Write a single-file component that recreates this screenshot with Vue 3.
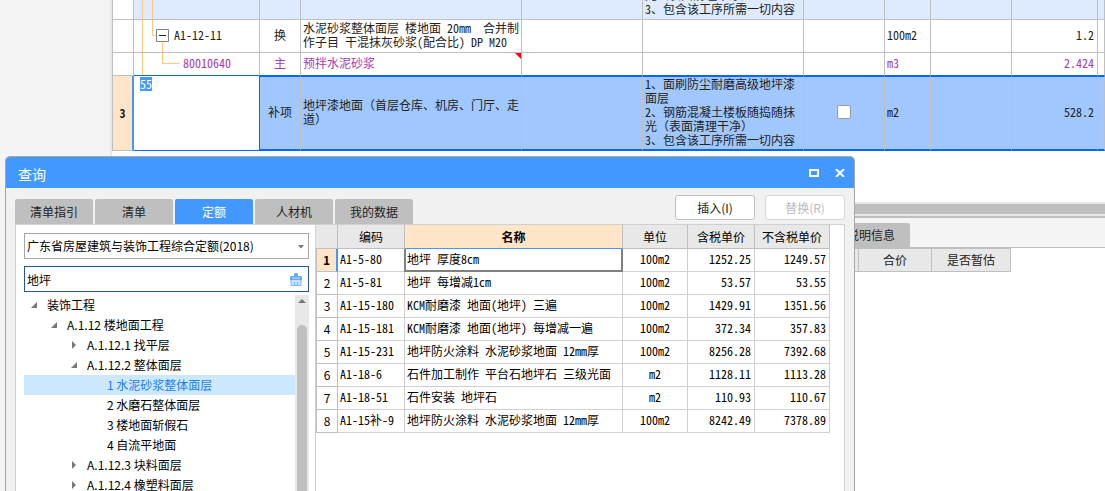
<script setup>
import { ref } from 'vue'

const itemCode = ref('55')
const keyword = ref('地坪')
const library = ref('2018')
const provisional = ref(false)

const tabs = ['清单指引', '清单', '定额', '人材机', '我的数据']
const activeTab = ref('定额')

const tree = [
  { text: '装饰工程', level: 0, state: 'open' },
  { text: 'A.1.12 楼地面工程', level: 1, state: 'open' },
  { text: 'A.1.12.1 找平层', level: 2, state: 'closed' },
  { text: 'A.1.12.2 整体面层', level: 2, state: 'open' },
  { text: '1 水泥砂浆整体面层', level: 3, selected: true },
  { text: '2 水磨石整体面层', level: 3 },
  { text: '3 楼地面斩假石', level: 3 },
  { text: '4 自流平地面', level: 3 },
  { text: 'A.1.12.3 块料面层', level: 2, state: 'closed' },
  { text: 'A.1.12.4 橡塑料面层', level: 2, state: 'closed' },
]

const quotas = [
  ['A1-5-80', '地坪 厚度8cm', '100m2', '1252.25', '1249.57'],
  ['A1-5-81', '地坪 每增减1cm', '100m2', '53.57', '53.55'],
  ['A1-15-180', 'KCM耐磨漆 地面(地坪) 三遍', '100m2', '1429.91', '1351.56'],
  ['A1-15-181', 'KCM耐磨漆 地面(地坪) 每增减一遍', '100m2', '372.34', '357.83'],
  ['A1-15-231', '地坪防火涂料 水泥砂浆地面 12mm厚', '100m2', '8256.28', '7392.68'],
  ['A1-18-6', '石件加工制作 平台石地坪石 三级光面', 'm2', '1128.11', '1113.28'],
  ['A1-18-51', '石件安装 地坪石', 'm2', '110.93', '110.67'],
  ['A1-15补-9', '地坪防火涂料 水泥砂浆地面 12mm厚', '100m2', '8242.49', '7378.89'],
]

const prevFeature = '光（表面清理干净）\n3、包含该工序所需一切内容'
const subName = '水泥砂浆整体面层 楼地面 20mm  合并制\n作子目 干混抹灰砂浆(配合比) DP M20'
const billName = '地坪漆地面（首层仓库、机房、门厅、走\n道）'
const billFeature =
  '1、面刷防尘耐磨高级地坪漆\n面层\n2、钢筋混凝土楼板随捣随抹\n光（表面清理干净）\n3、包含该工序所需一切内容'
</script>

<template>
  <div class="app">
    <aside class="side"></aside>
    <main class="work">
      <table class="bill">
        <colgroup>
          <col class="b-no" /><col class="b-code" /><col class="b-type" /><col class="b-name" />
          <col class="b-spare" /><col class="b-feature" /><col class="b-check" /><col class="b-unit" />
          <col class="b-check" /><col class="b-qty" /><col />
        </colgroup>
        <tbody>
          <tr class="row-prev">
            <td class="plain"></td>
            <td class="tree-cell">
              <svg class="links" width="60" height="19"><path d="M8.5 0V19M18.5 0V19" /></svg>
            </td>
            <td></td><td></td><td></td>
            <td><div class="clip">{{ prevFeature }}</div></td>
            <td></td><td></td><td></td><td></td><td></td>
          </tr>
          <tr class="row-sub">
            <td></td>
            <td class="tree-cell lv1">
              <svg class="links" width="60" height="32">
                <path d="M8.5 0V32M18.5 0V15.5H22M28.5 22V32" />
                <path class="box" d="M22.5 9.5h12v12h-12z" />
                <path class="minus" d="M25 15.5h7" />
              </svg>
              <span>A1-12-11</span>
            </td>
            <td class="mid">换</td>
            <td>{{ subName }}</td>
            <td></td><td></td><td></td>
            <td>100m2</td>
            <td></td>
            <td class="num">1.2</td>
            <td></td>
          </tr>
          <tr class="row-main">
            <td></td>
            <td class="tree-cell lv2">
              <svg class="links" width="60" height="22"><path d="M8.5 0V22M28.5 0V10.5H45" /></svg>
              <span>80010640</span>
            </td>
            <td class="mid">主</td>
            <td class="marked">预拌水泥砂浆</td>
            <td></td><td></td><td></td>
            <td>m3</td>
            <td></td>
            <td class="num">2.424</td>
            <td></td>
          </tr>
          <tr class="row-current">
            <th scope="row">3</th>
            <td class="editing"><input v-model="itemCode" aria-label="项目编码" class="code-input" type="text" /></td>
            <td class="mid">补项</td>
            <td>{{ billName }}</td>
            <td></td>
            <td>{{ billFeature }}</td>
            <td class="mid"><input v-model="provisional" class="check" type="checkbox" aria-label="锁定" /></td>
            <td>m2</td>
            <td></td>
            <td class="num">528.2</td>
            <td></td>
          </tr>
        </tbody>
      </table>
      <div class="blank"></div>
      <div class="hscroll"></div>
      <section class="detail">
        <div class="detail-tabs"><button type="button">说明信息</button></div>
        <table class="detail-table">
          <colgroup><col class="d-lead" /><col class="d-sum" /><col class="d-est" /></colgroup>
          <thead><tr><th></th><th>合价</th><th>是否暂估</th></tr></thead>
        </table>
      </section>
    </main>

    <section class="dialog" role="dialog" aria-labelledby="dialog-title">
      <header class="titlebar">
        <h1 id="dialog-title">查询</h1>
        <button type="button" aria-label="最大化">
          <svg width="10" height="8"><path d="M1 1h8v6H1z" fill="none" stroke="#fff" stroke-width="2" /></svg>
        </button>
        <button type="button" aria-label="关闭">
          <svg width="10" height="8"><path d="M1 0L9 8M9 0L1 8" fill="none" stroke="#fff" stroke-width="2" /></svg>
        </button>
      </header>

      <div class="toolbar">
        <nav class="tabs">
          <button
            v-for="t in tabs" :key="t" type="button"
            :class="{ active: t === activeTab }" @click="activeTab = t"
          >{{ t }}</button>
        </nav>
        <div class="actions">
          <button type="button">插入(I)</button>
          <button type="button" disabled>替换(R)</button>
        </div>
      </div>

      <div class="panel">
        <div class="finder">
          <div class="field">
            <select v-model="library" aria-label="定额库">
              <option value="2018">广东省房屋建筑与装饰工程综合定额(2018)</option>
            </select>
            <svg class="caret" width="6" height="4"><path d="M0 0h6L3 3.5z" fill="#777" /></svg>
          </div>
          <div class="field search">
            <input v-model="keyword" type="text" aria-label="查询关键字" />
            <button type="button" class="clear" aria-label="清除" @click="keyword = ''">
              <svg width="12" height="13" viewBox="0 0 12 13">
                <path d="M4 1l1-1h2l1 1v2h3l1 1v3H0V4l1-1h3z" fill="#65a9fa" />
                <path d="M2 5h8" stroke="#b5d7ff" />
                <path d="M1 7h10v5H1z" fill="#c9e1ff" />
                <path d="M1 7v5.5h10V7M4.5 9v3M7.5 9v3" fill="none" stroke="#79b6ff" />
              </svg>
            </button>
          </div>
          <div class="tree-box">
            <ul class="tree" role="tree">
              <li
                v-for="n in tree" :key="n.text" role="treeitem"
                :class="['level' + n.level, { selected: n.selected }]"
              >
                <svg class="twist" width="8" height="8">
                  <path v-if="n.state === 'open'" d="M7 1v6H1z" />
                  <path v-else-if="n.state === 'closed'" d="M2 0l4 4-4 4z" />
                </svg>
                <span>{{ n.text }}</span>
              </li>
            </ul>
            <div class="vscroll">
              <svg width="8" height="4"><path d="M4 0l4 4H0z" fill="#777" /></svg>
              <div class="thumb"></div>
            </div>
          </div>
        </div>

        <div class="result">
          <table class="quota">
            <colgroup>
              <col class="q-no" /><col class="q-code" /><col class="q-name" />
              <col class="q-unit" /><col class="q-price" /><col class="q-net" />
            </colgroup>
            <thead>
              <tr>
                <th></th><th>编码</th><th class="current">名称</th><th>单位</th><th>含税单价</th><th>不含税单价</th>
              </tr>
            </thead>
            <tbody>
              <tr v-for="(q, i) in quotas" :key="q[0]">
                <th scope="row" :class="{ current: i === 0 }">{{ i + 1 }}</th>
                <td>{{ q[0] }}</td>
                <td :class="{ focus: i === 0 }">{{ q[1] }}</td>
                <td class="mid">{{ q[2] }}</td>
                <td class="num">{{ q[3] }}</td>
                <td class="num">{{ q[4] }}</td>
              </tr>
            </tbody>
          </table>
        </div>
      </div>
    </section>
  </div>
</template>

<style>
body {
  margin: 0;
  background: #fff;
}
</style>

<style scoped>
.app {
  position: relative;
  display: flex;
  min-height: 100vh;
  overflow: hidden;
  color: #222;
  font: 12px/14px "Noto Sans CJK SC", sans-serif;
}
.app *,
.app *::before,
.app *::after {
  box-sizing: border-box;
}
button,
input,
select {
  margin: 0;
  padding: 0;
  border: 0;
  border-radius: 0;
  outline: 0;
  background: none;
  color: inherit;
  font: inherit;
}
svg {
  display: block;
}
table {
  table-layout: fixed;
  border-spacing: 0;
}
td,
th {
  padding: 0 2px;
  font-weight: 400;
  text-align: left;
  vertical-align: middle;
  white-space: pre;
}
td {
  padding-bottom: 2px;
}
.mid {
  text-align: center;
}
.num {
  padding-right: 3px;
  text-align: right;
}

.side {
  flex: 0 0 112px;
  border-right: 2px solid #e8e8e8;
  background: #f4f4f4;
}
.work {
  flex: 1;
  min-width: 0;
}

/* bill grid */
.bill {
  width: 100%;
  border-left: 1px solid #bfbfbf;
  font-family: "Noto Sans Mono CJK SC", "Noto Sans CJK SC", monospace;
}
.b-no { width: 21px; }
.b-code { width: 126px; }
.b-type { width: 41px; }
.b-name { width: 221px; }
.b-spare { width: 121px; }
.b-feature { width: 161px; }
.b-check { width: 81px; }
.b-unit { width: 46px; }
.b-qty { width: 86px; }
.bill td,
.bill th {
  border-right: 1px solid #bfbfbf;
  border-bottom: 1px solid #bfbfbf;
}
.bill .tree-cell {
  position: relative;
  white-space: normal;
}
.bill .lv1 { padding-left: 40px; }
.bill .lv2 { padding-left: 49px; }
.links {
  position: absolute;
  top: 0;
  left: 0;
  fill: none;
  stroke: #ffc97f;
}
.links .box { stroke: #808080; }
.links .minus { stroke: #222; }
.row-prev { height: 20px; background: #ddeaff; }
.row-prev td { padding-bottom: 0; }
.row-prev .plain { background: #fff; }
.clip {
  display: flex;
  align-items: flex-end;
  height: 19px;
  padding-bottom: 3px;
  overflow: hidden;
}
.row-sub { height: 33px; }
.row-main { height: 23px; color: #a439b5; }
.row-main td:nth-child(n + 2) { border-bottom-color: #0066ff; }
.marked { position: relative; }
.marked::after {
  content: "";
  position: absolute;
  top: 0;
  right: 0;
  width: 6px;
  height: 6px;
  background: #f00;
  clip-path: polygon(0 0, 100% 0, 100% 100%);
}
.row-current { height: 75px; background: #a0c8ff; }
.row-current td:nth-child(n + 3) {
  border-top: 1px solid #0066ff;
  border-bottom: 2px solid #0066ff;
}
.bill .row-current th {
  border-right: 2px solid #4398ff;
  background: #ffe5c8;
  font-weight: 700;
  text-align: center;
}
.row-current .editing {
  padding: 1px 6px;
  border-right-color: #0066ff;
  border-bottom-color: #0066ff;
  background: #fff;
  vertical-align: top;
}
.code-input {
  display: block;
  width: 12px;
  height: 14px;
  background: #4398ff;
  color: #fff;
}
.check {
  display: block;
  width: 14px;
  height: 14px;
  margin: 0 auto;
  border: 1px solid #999;
  border-radius: 2px;
  appearance: none;
  background: #fff;
}

.blank {
  height: 51px;
}
.hscroll {
  height: 14px;
  border: solid #e8e8e8;
  border-width: 2px 0;
  background: #bfbfbf;
}
.detail {
  border-top: 2px solid #bfbfbf;
}
.detail-tabs {
  display: flex;
  height: 30px;
  padding: 5px 0 0 720px;
  border-bottom: 1px solid #bfbfbf;
  background: #f4f4f4;
}
.detail-tabs button {
  width: 78px;
  border-radius: 2px 2px 0 0;
  background: #bfbfbf;
}
.detail-table { width: 899px; }
.d-lead { width: 747px; }
.d-sum { width: 73px; }
.d-est { width: 79px; }
.detail-table th {
  height: 24px;
  border: solid #bfbfbf;
  border-width: 1px 1px 1px 0;
  background: #e8e8e8;
  text-align: center;
}

/* query dialog */
.dialog {
  position: absolute;
  inset: 156px 250px 0 5px;
  display: flex;
  flex-direction: column;
  overflow: hidden;
  border: 1px solid #a6a6a6;
  border-bottom: 0;
  border-radius: 5px 5px 0 0;
  background: #f1f1f1;
}
.titlebar {
  display: flex;
  flex: 0 0 31px;
  align-items: center;
  gap: 16px;
  padding: 0 9px 0 12px;
  background: #4398ff;
  color: #fff;
}
.titlebar h1 {
  flex: 1;
  margin: 0;
  padding-top: 2px;
  font-size: 14px;
  font-weight: 400;
}
.toolbar {
  display: flex;
  flex: 0 0 36px;
  justify-content: space-between;
  padding: 0 9px;
}
.tabs {
  display: flex;
  align-items: flex-end;
  gap: 2px;
}
.tabs button {
  width: 78px;
  height: 25px;
  border-radius: 2px 2px 0 0;
  background: #bfbfbf;
}
.tabs .active {
  background: #4398ff;
  color: #fff;
}
.actions {
  display: flex;
  gap: 10px;
  padding-top: 7px;
}
.actions button {
  width: 80px;
  height: 25px;
  border: 1px solid #bfbfbf;
  border-radius: 3px;
  background: #fff;
}
.actions button:disabled {
  border-color: #d8d8d8;
  color: #bbb;
}
.panel {
  display: flex;
  flex: 1;
  min-height: 0;
  margin: 0 9px;
  border: solid #d0d0d0;
  border-width: 1px 1px 0;
  background: #fff;
  color: #000;
}
.finder {
  display: flex;
  flex: 0 0 300px;
  flex-direction: column;
  min-height: 0;
  padding: 8px 6px 0 8px;
  border-right: 1px solid #d0d0d0;
}
.field {
  position: relative;
  flex: 0 0 26px;
  margin-bottom: 7px;
}
.field select,
.field input {
  width: 100%;
  height: 26px;
  padding: 0 24px 0 2px;
  border: 1px solid #a6a6a6;
  appearance: none;
  background: #fff;
}
.field input { border-color: #2a5699; }
.search { margin-bottom: 3px; }
.caret {
  position: absolute;
  top: 12px;
  right: 5px;
}
.clear {
  position: absolute;
  top: 7px;
  right: 7px;
}
.tree-box {
  display: flex;
  flex: 1;
  min-height: 0;
}
.tree {
  flex: 1;
  margin: 0;
  padding: 0;
  overflow: hidden;
  list-style: none;
}
.tree li {
  display: flex;
  align-items: center;
  gap: 9px;
  height: 20px;
  white-space: pre;
}
.level0 { padding-left: 6px; }
.level1 { padding-left: 26px; }
.level2 { padding-left: 46px; }
.level3 { padding-left: 66px; }
.tree .selected {
  background: #cce8ff;
  color: #1e7bea;
}
.twist { fill: #777; }
.vscroll {
  display: flex;
  flex: 0 0 14px;
  flex-direction: column;
  align-items: center;
  padding-top: 4px;
  background: #e8e8e8;
}
.thumb {
  flex: 1;
  width: 10px;
  margin-top: 22px;
  border-radius: 5px 5px 0 0;
  background: #bfbfbf;
}
.result {
  flex: 1;
  min-width: 0;
}
.quota {
  width: 514px;
  font-family: "Noto Sans Mono CJK SC", "Noto Sans CJK SC", monospace;
}
.q-no { width: 22px; }
.q-code { width: 67px; }
.q-name { width: 218px; }
.q-unit { width: 65px; }
.q-price { width: 67px; }
.q-net { width: 75px; }
.quota td,
.quota th {
  height: 23px;
  border-right: 1px solid #d0d0d0;
  border-bottom: 1px solid #d0d0d0;
}
.quota th {
  border-color: #bfbfbf;
  text-align: center;
}
.quota thead th {
  height: 24px;
  background: #e8e8e8;
}
.quota tbody th {
  border-left: 1px solid #bfbfbf;
  font-family: "Noto Sans CJK SC", sans-serif;
}
.quota .current {
  background: #ffe5c8;
  font-weight: 700;
}
.quota thead .current { border-bottom-color: #4398ff; }
.quota tbody .current { border-right: 2px solid #4398ff; }
.quota .focus { position: relative; }
.quota .focus::after {
  content: "";
  position: absolute;
  inset: 0 -1px -1px -1px;
  border: solid #808080;
  border-width: 0 2px 2px;
}
</style>
